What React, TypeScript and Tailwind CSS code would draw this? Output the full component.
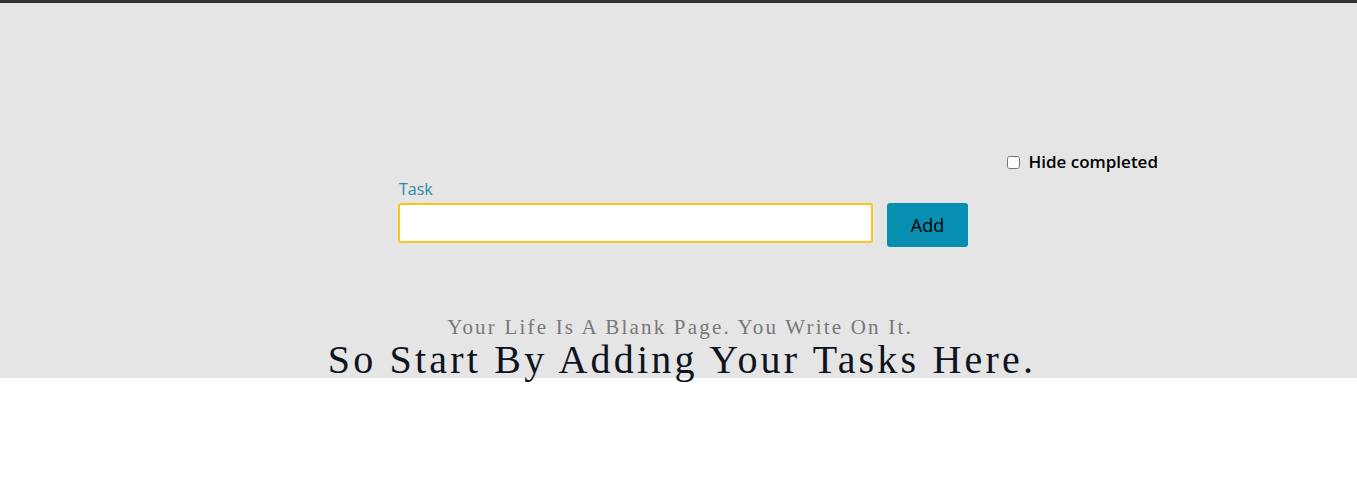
import { useState } from "react"

export default function App() {
    const [task, setTask] = useState("")
    const [hide, setHide] = useState(false)

    return (
        <div className="min-h-[477px] bg-white" style={{ fontFamily: "'Open Sans', sans-serif" }}>
            <div className="h-[3px] bg-[#333333]" />
            <div className="h-[375px] bg-[#e5e5e5]">
                <div className="ml-[398px] w-[760px] pt-[147px]">
                    {/* hide completed toggle */}
                    <label className="flex items-center justify-end gap-[8px] text-[17px] font-semibold text-black leading-[24px]">
                        <input
                            type="checkbox"
                            checked={hide}
                            onChange={(e) => setHide(e.target.checked)}
                            className="w-[13px] h-[13px]"
                        />
                        Hide completed
                    </label>

                    <form className="w-[570px]" onSubmit={(e) => e.preventDefault()}>
                        <label className="block pl-[1px] text-[16px] leading-[20px] text-[#2b89a8] mt-[5px]">Task</label>
                        <div className="flex items-start gap-[14px] mt-[4px]">
                            <input
                                type="text"
                                value={task}
                                onChange={(e) => setTask(e.target.value)}
                                className="w-[475px] h-[40px] rounded-[3px] border-2 border-[#f7c71c] bg-white px-2 outline-none"
                            />
                            <button
                                type="submit"
                                className="w-[81px] h-[44px] rounded-[3px] bg-[#088eb0] text-[18px] text-black"
                            >
                                Add
                            </button>
                        </div>
                    </form>
                </div>

                <div className="mt-[68px] text-center" style={{ fontFamily: "'Liberation Serif', Georgia, serif" }}>
                    <p className="pl-[3px] text-[21px] leading-[24px] tracking-[2.2px] text-[#76787c]">
                        Your Life Is A Blank Page. You Write On It.
                    </p>
                    <h1 className="pl-[7px] text-[40px] leading-[41px] tracking-[3.2px] text-[#0d1320]">
                        So Start By Adding Your Tasks Here.
                    </h1>
                </div>
            </div>
        </div>
    )
}
